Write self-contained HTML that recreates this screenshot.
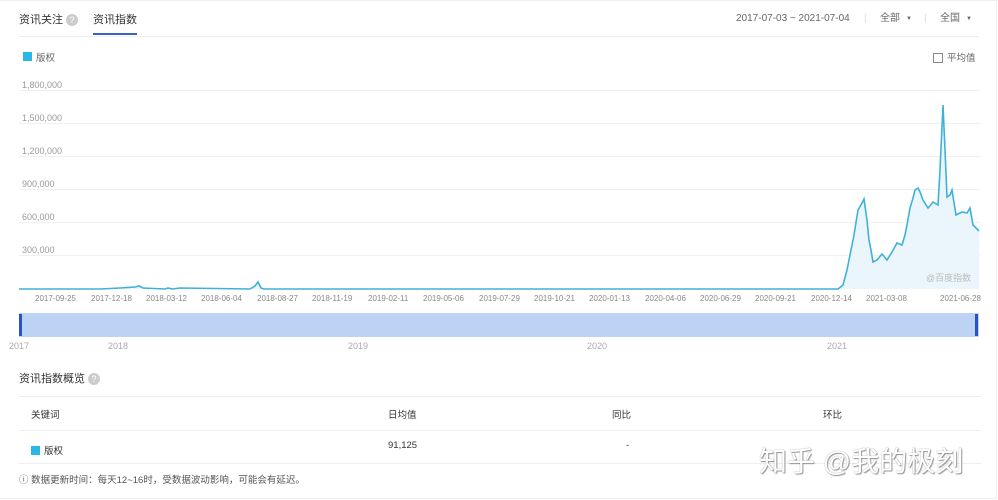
<!DOCTYPE html>
<html><head><meta charset="utf-8"><style>
body{margin:0;width:998px;height:500px;background:#fff;font-family:"Liberation Sans","Noto Sans CJK SC",sans-serif;position:relative;overflow:hidden;color:#333}
.a{position:absolute;white-space:nowrap}
.s{font-size:9px;color:#999}
.q{display:inline-block;width:12px;height:12px;border-radius:50%;background:#ccc;color:#fff;font-size:9px;text-align:center;line-height:12px;vertical-align:middle}
.h{top:13px;font-size:10px;line-height:12px;color:#666}
</style></head><body>
<div style="position:absolute;left:0;top:0;width:997px;height:499px;border:1px solid #eee;border-left:none;box-sizing:border-box"></div>
<div class="a" style="left:19px;top:11px;font-size:11px;color:#333">资讯关注 <span class="q">?</span></div>
<div class="a" style="left:93px;top:11px;font-size:11px;color:#333">资讯指数</div>
<div class="a" style="left:93px;top:33px;width:44px;height:2px;background:#3a5fc9"></div>
<div class="a" style="left:19px;top:36px;width:960px;height:1px;background:#eee"></div>
<div class="a h" style="left:736px">2017-07-03 ~ 2021-07-04</div>
<div class="a h" style="left:864px;color:#ddd">|</div>
<div class="a h" style="left:880px">全部</div>
<div class="a h" style="left:906px;font-size:6px">▼</div>
<div class="a h" style="left:924px;color:#ddd">|</div>
<div class="a h" style="left:940px">全国</div>
<div class="a h" style="left:966px;font-size:6px">▼</div>
<div class="a" style="left:23px;top:52px;width:9px;height:9px;background:#2ab6e6"></div>
<div class="a" style="left:36px;top:50px;font-size:9.5px;color:#666">版权</div>
<div class="a" style="left:933px;top:53px;width:8px;height:8px;border:1px solid #888"></div>
<div class="a" style="left:947px;top:50px;font-size:9.5px;color:#666">平均值</div>
<svg class="a" style="left:0;top:0" width="998" height="360">
<g stroke="#f0f0f0" stroke-width="1">
<line x1="19" y1="90.5" x2="980" y2="90.5"/><line x1="19" y1="123.5" x2="980" y2="123.5"/><line x1="19" y1="156.5" x2="980" y2="156.5"/><line x1="19" y1="189.5" x2="980" y2="189.5"/><line x1="19" y1="222.5" x2="980" y2="222.5"/><line x1="19" y1="255.5" x2="980" y2="255.5"/></g>
<path d="M19 289 L100 289 L120 288 L135 287 L139 286 L143 288 L165 289 L168 288 L172 289 L180 288 L250 289 L255 286 L258 282 L261 288 L264 289 L838 289 L843 285 L847 270 L850 255 L854 235 L858 210 L861 205 L864 199 L867 220 L869 240 L871 250 L873 262 L877 260 L882 254 L887 260 L892 252 L897 243 L902 245 L905 235 L907 225 L910 208 L913 198 L915 190 L918 188 L920 192 L923 200 L928 208 L933 202 L938 205 L940 170 L943 105 L945 150 L947 197 L950 195 L952 190 L956 215 L962 212 L967 213 L970 208 L973 225 L979 231 L979 289 Z" fill="#eaf6fb" stroke="none"/>
<path d="M19 289 L100 289 L120 288 L135 287 L139 286 L143 288 L165 289 L168 288 L172 289 L180 288 L250 289 L255 286 L258 282 L261 288 L264 289 L838 289 L843 285 L847 270 L850 255 L854 235 L858 210 L861 205 L864 199 L867 220 L869 240 L871 250 L873 262 L877 260 L882 254 L887 260 L892 252 L897 243 L902 245 L905 235 L907 225 L910 208 L913 198 L915 190 L918 188 L920 192 L923 200 L928 208 L933 202 L938 205 L940 170 L943 105 L945 150 L947 197 L950 195 L952 190 L956 215 L962 212 L967 213 L970 208 L973 225 L979 231" fill="none" stroke="#3fb1d9" stroke-width="1.6"/>
<rect x="19" y="313" width="960" height="24" fill="#bdd3f6"/>
<rect x="19" y="314" width="3" height="22" fill="#2852c8"/><rect x="975" y="314" width="3" height="22" fill="#2852c8"/>
</svg>
<div class="a s" style="left:22px;top:80px">1,800,000</div>
<div class="a s" style="left:22px;top:113px">1,500,000</div>
<div class="a s" style="left:22px;top:146px">1,200,000</div>
<div class="a s" style="left:22px;top:179px">900,000</div>
<div class="a s" style="left:22px;top:212px">600,000</div>
<div class="a s" style="left:22px;top:245px">300,000</div>
<div class="a s" style="left:926px;top:271px;color:#bbb">@百度指数</div>
<div class="a" style="top:294px;left:0;font-size:8px;color:#888">
<span class="a" style="left:35px">2017-09-25</span><span class="a" style="left:91px">2017-12-18</span><span class="a" style="left:146px">2018-03-12</span><span class="a" style="left:201px">2018-06-04</span><span class="a" style="left:257px">2018-08-27</span><span class="a" style="left:312px">2018-11-19</span><span class="a" style="left:368px">2019-02-11</span><span class="a" style="left:423px">2019-05-06</span><span class="a" style="left:479px">2019-07-29</span><span class="a" style="left:534px">2019-10-21</span><span class="a" style="left:589px">2020-01-13</span><span class="a" style="left:645px">2020-04-06</span><span class="a" style="left:700px">2020-06-29</span><span class="a" style="left:755px">2020-09-21</span><span class="a" style="left:811px">2020-12-14</span><span class="a" style="left:866px">2021-03-08</span><span class="a" style="left:940px">2021-06-28</span></div>
<div class="a" style="top:341px;left:0;font-size:9px;color:#aaa">
<span class="a" style="left:9px">2017</span><span class="a" style="left:108px">2018</span><span class="a" style="left:348px">2019</span><span class="a" style="left:587px">2020</span><span class="a" style="left:827px">2021</span></div>
<div class="a" style="left:19px;top:370px;font-size:11px;color:#333">资讯指数概览 <span class="q">?</span></div>
<div class="a" style="left:19px;top:396px;width:962px;height:1px;background:#eee"></div>
<div class="a" style="left:31px;top:407px;font-size:9.5px">关键词</div>
<div class="a" style="left:388px;top:407px;font-size:9.5px">日均值</div>
<div class="a" style="left:612px;top:407px;font-size:9.5px">同比</div>
<div class="a" style="left:823px;top:407px;font-size:9.5px">环比</div>
<div class="a" style="left:19px;top:430px;width:962px;height:1px;background:#eee"></div>
<div class="a" style="left:31px;top:446px;width:9px;height:9px;background:#2ab6e6"></div>
<div class="a" style="left:44px;top:443px;font-size:9.5px">版权</div>
<div class="a" style="left:388px;top:440px;font-size:9.5px">91,125</div>
<div class="a" style="left:626px;top:440px;font-size:9.5px">-</div>
<div class="a" style="left:19px;top:463px;width:962px;height:1px;background:#eee"></div>
<div class="a" style="left:19px;top:472px;font-size:9.5px;color:#555">ⓘ 数据更新时间：每天12~16时，受数据波动影响，可能会有延迟。</div>
<div class="a" style="left:759px;top:440px;font-size:28px;color:#fff;text-shadow:0 0 1px #777,1px 1px 1px #999">知乎 @我的极刻</div>
</body></html>
